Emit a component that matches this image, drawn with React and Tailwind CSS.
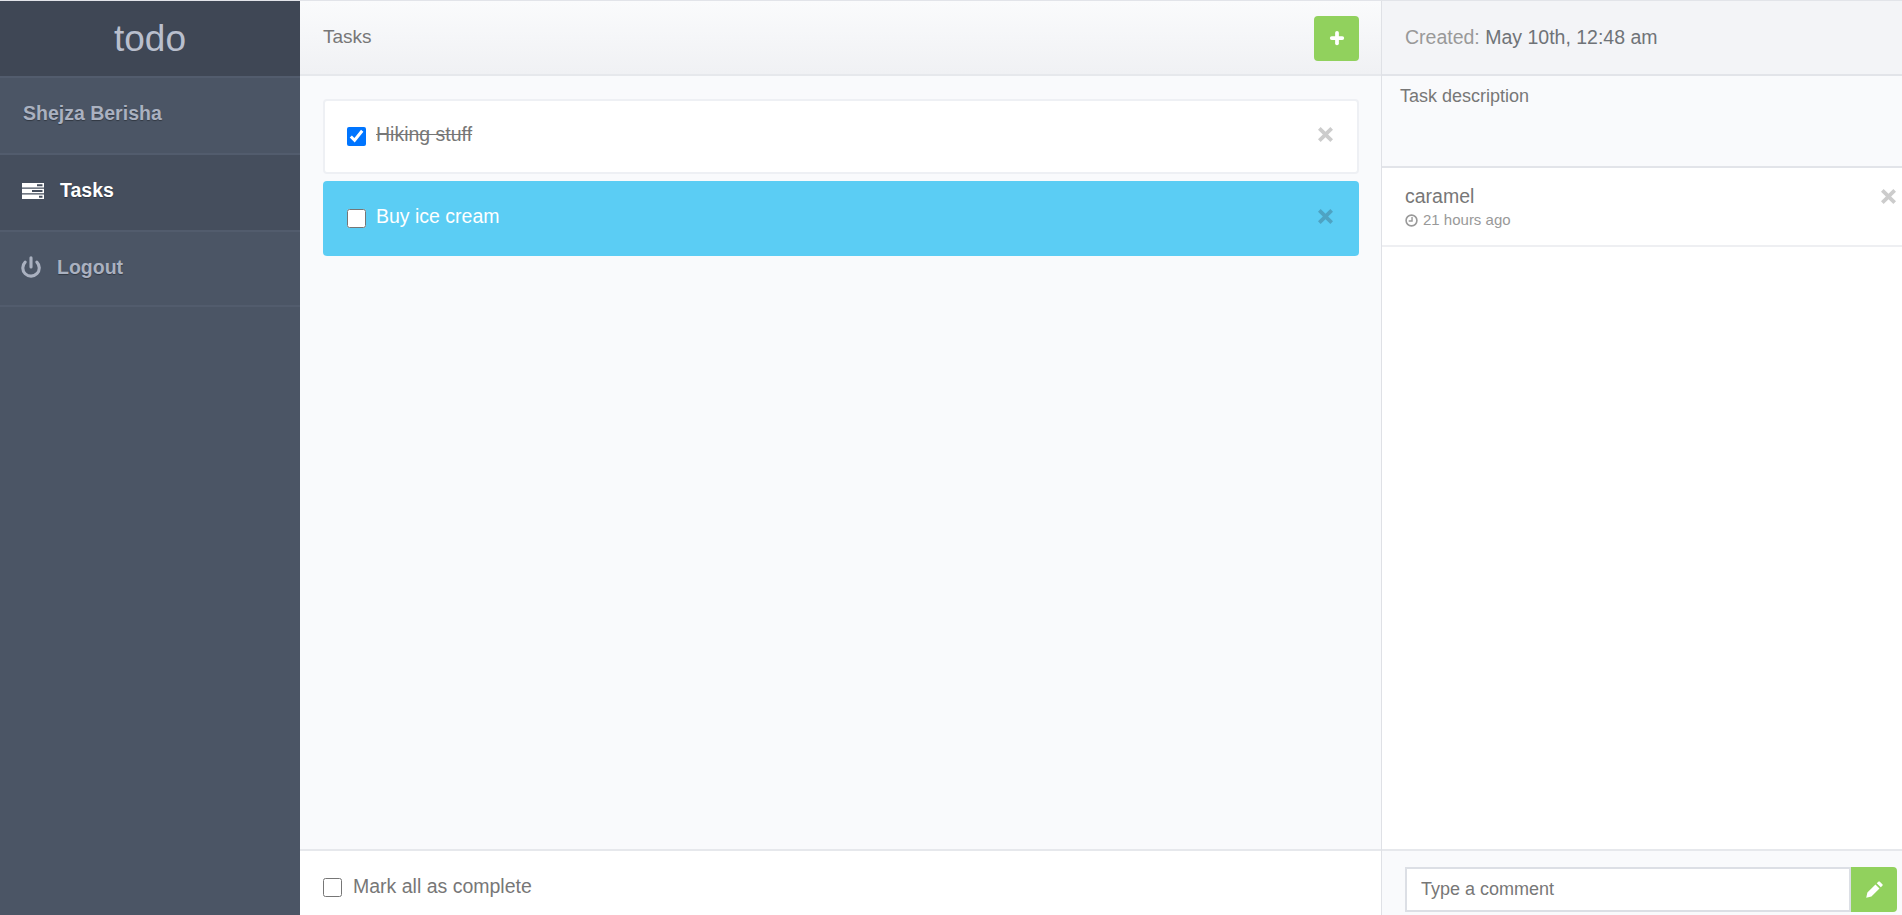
import React from 'react';
import { Power, Plus } from 'lucide-react';

const TasksIcon = ({ className }) => (
  <svg viewBox="0 0 22 16" className={className} fill="currentColor">
    <path fillRule="evenodd" d="M0 0h22v4.5H0zM15 1.2v2h5.5v-2zM0 5.75h22v4.5H0zM10 7v2h10.5V7zM0 11.5h22V16H0zM17 12.7v2h3.5v-2z" />
  </svg>
);

const TimesIcon = ({ className }) => (
  <svg viewBox="0.6 0.6 14.8 14.8" className={className} fill="currentColor">
    <path d="M3.2 0.6 8 5.4 12.8 0.6 15.4 3.2 10.6 8 15.4 12.8 12.8 15.4 8 10.6 3.2 15.4 0.6 12.8 5.4 8 0.6 3.2z" />
  </svg>
);

const ClockIcon = ({ className }) => (
  <svg viewBox="0 0 12 12" className={className} fill="none" stroke="currentColor">
    <circle cx="6" cy="6" r="5" strokeWidth="1.5" />
    <path d="M6.5 2.8v3.7H3.4" strokeWidth="1.3" />
  </svg>
);

const PencilIcon = ({ className }) => (
  <svg viewBox="0 0 16 16" className={className} fill="currentColor">
    <path d="M11.6 0.6a1 1 0 0 1 1.4 0l2.4 2.4a1 1 0 0 1 0 1.4l-1.5 1.5-3.8-3.8zM8.9 3.3l3.8 3.8-7.6 7.6-4.9 1.1 1.1-4.9z" />
  </svg>
);

const TaskRow = ({ title, done, active }) => (
  <div
    className={
      active
        ? 'flex h-[75px] items-center rounded bg-[#5bcdf4] pl-6 pr-[26px] text-white'
        : 'flex h-[75px] items-center rounded border-2 border-[#eef0f4] bg-white pl-[22px] pr-[24px] text-[#777]'
    }
  >
    <input type="checkbox" defaultChecked={done} className="h-[19px] w-[19px] shrink-0" />
    <span className={done ? 'ml-[10px] -mt-[3px] flex-1 text-[19.5px] line-through' : 'ml-[10px] -mt-[3px] flex-1 text-[19.5px]'}>
      {title}
    </span>
    <TimesIcon className={active ? '-mt-[4px] h-[15px] w-[15px] text-[#4ea3c3]' : '-mt-[4px] h-[15px] w-[15px] text-[#ccc]'} />
  </div>
);

export default function App() {
  return (
    <div className="flex h-screen flex-col overflow-hidden border-t border-[#e2e4e9] bg-white font-['Liberation_Sans',Arial,sans-serif] text-[#777]">
      <div className="flex min-h-0 flex-1">
        {/* Sidebar */}
        <aside className="flex w-[300px] shrink-0 flex-col bg-[#4b5565]">
          <div className="flex h-[75px] items-center justify-center bg-[#3f4755] text-[37px] text-[#b9bfcd]">todo</div>
          <div className="flex h-[77px] items-center border-t-2 border-[#525c6d] pb-[3px] pl-[23px] text-[19.5px] font-bold text-[#aab1c0] [text-shadow:0_1px_1px_rgba(0,0,0,0.35)]">
            Shejza Berisha
          </div>
          <div className="flex h-[77px] items-center border-t-2 border-[#525c6d] bg-[#454e5d] pb-[3px] pl-[22px] text-[19.5px] font-bold text-white [text-shadow:0_1px_1px_rgba(0,0,0,0.35)]">
            <TasksIcon className="h-4 w-[22px]" />
            <span className="ml-[16px]">Tasks</span>
          </div>
          <div className="flex h-[77px] items-center border-y-2 border-[#525c6d] pb-[1px] pl-[20px] text-[19.5px] font-bold text-[#aab1c0] [text-shadow:0_1px_1px_rgba(0,0,0,0.35)]">
            <Power className="-mt-[2px] h-[22px] w-[22px]" strokeWidth={3.4} />
            <span className="ml-[15px]">Logout</span>
          </div>
        </aside>

        {/* Task list */}
        <main className="flex w-[1081px] shrink-0 flex-col bg-[#f9fafc]">
          <header className="flex h-[75px] shrink-0 items-center justify-between border-b-2 border-[#e6e8ec] bg-gradient-to-b from-[#fafbfc] to-[#f0f1f4] pl-[23px] pr-[22px]">
            <span className="text-[19px]">Tasks</span>
            <button className="mt-[1px] flex h-[45px] w-[45px] items-center justify-center rounded bg-[#91d15d] text-white">
              <Plus className="h-[18px] w-[18px]" strokeWidth={5} />
            </button>
          </header>
          <div className="flex flex-1 flex-col gap-[7px] pl-[23px] pr-[22px] pt-[23px]">
            <TaskRow title="Hiking stuff" done />
            <TaskRow title="Buy ice cream" active />
          </div>
          <footer className="flex h-[66px] shrink-0 items-center border-t-2 border-[#e6e8ec] bg-white pl-[23px] pt-[10px]">
            <input type="checkbox" className="-mt-[2px] h-[19px] w-[19px]" />
            <span className="ml-[11px] -mt-[2px] text-[19.5px]">Mark all as complete</span>
          </footer>
        </main>

        {/* Task details */}
        <section className="flex min-w-0 flex-1 flex-col border-l border-[#dfe1e6]">
          <div className="flex h-[75px] shrink-0 items-center border-b-2 border-[#e2e4e9] bg-[#f3f4f7] pl-[23px] text-[19.5px] text-[#6f7378]">
            <span className="text-[#999]">Created:&nbsp;</span>May 10th, 12:48 am
          </div>
          <div className="h-[92px] shrink-0 border-b-2 border-[#e2e4e9] bg-[#f9fafc] pl-[18px] pt-[10px] text-[18px] leading-[20px]">Task description</div>
          <div className="relative h-[79px] shrink-0 border-b-2 border-[#eeeff2] pl-[23px] pt-[17px]">
            <div className="text-[19.5px] leading-[22px]">caramel</div>
            <div className="mt-[4px] flex items-center text-[15px] leading-[18px] text-[#999]">
              <ClockIcon className="mr-[5px] h-[13px] w-[13px] shrink-0" />
              21 hours ago
            </div>
            <TimesIcon className="absolute right-[6px] top-[21px] h-[15px] w-[15px] text-[#ccc]" />
          </div>
          <div className="flex-1" />
          <footer className="flex h-[66px] shrink-0 items-center border-t-2 border-[#e6e8ec] bg-[#f9fafc] pl-[23px] pr-[5px] pt-[12px]">
            <input
              readOnly
              placeholder="Type a comment"
              className="h-[45px] flex-1 border-2 border-[#dcdfe5] bg-white pl-[14px] text-[18px] text-[#777] placeholder:text-[#777]"
            />
            <button className="flex h-[45px] w-[46px] items-center justify-center rounded-r bg-[#91d15d] text-white">
              <PencilIcon className="h-[17px] w-[17px]" />
            </button>
          </footer>
        </section>
      </div>
    </div>
  );
}
